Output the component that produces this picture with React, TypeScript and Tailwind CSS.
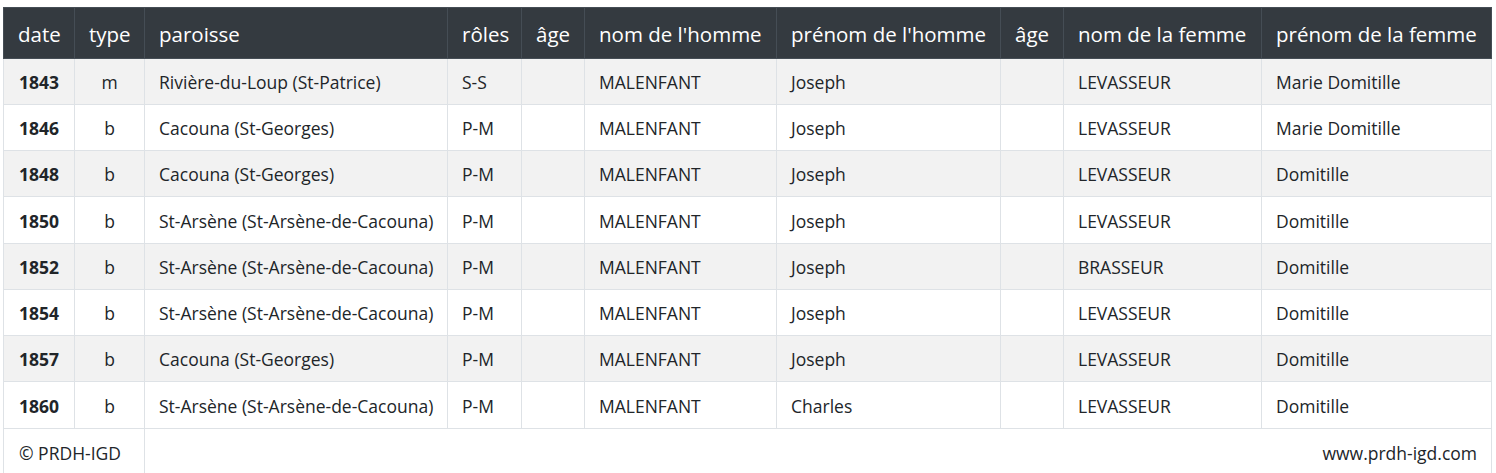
const rows = [
  ['1843', 'm', 'Rivière-du-Loup (St-Patrice)', 'S-S', '', 'MALENFANT', 'Joseph', '', 'LEVASSEUR', 'Marie Domitille'],
  ['1846', 'b', 'Cacouna (St-Georges)', 'P-M', '', 'MALENFANT', 'Joseph', '', 'LEVASSEUR', 'Marie Domitille'],
  ['1848', 'b', 'Cacouna (St-Georges)', 'P-M', '', 'MALENFANT', 'Joseph', '', 'LEVASSEUR', 'Domitille'],
  ['1850', 'b', 'St-Arsène (St-Arsène-de-Cacouna)', 'P-M', '', 'MALENFANT', 'Joseph', '', 'LEVASSEUR', 'Domitille'],
  ['1852', 'b', 'St-Arsène (St-Arsène-de-Cacouna)', 'P-M', '', 'MALENFANT', 'Joseph', '', 'BRASSEUR', 'Domitille'],
  ['1854', 'b', 'St-Arsène (St-Arsène-de-Cacouna)', 'P-M', '', 'MALENFANT', 'Joseph', '', 'LEVASSEUR', 'Domitille'],
  ['1857', 'b', 'Cacouna (St-Georges)', 'P-M', '', 'MALENFANT', 'Joseph', '', 'LEVASSEUR', 'Domitille'],
  ['1860', 'b', 'St-Arsène (St-Arsène-de-Cacouna)', 'P-M', '', 'MALENFANT', 'Charles', '', 'LEVASSEUR', 'Domitille'],
];

const headers = ['date', 'type', 'paroisse', 'rôles', 'âge', "nom de l'homme", "prénom de l'homme", 'âge', 'nom de la femme', 'prénom de la femme'];

const widths = ['w-[71px]', 'w-[70px]', 'w-[303px]', 'w-[74px]', 'w-[63px]', 'w-[192px]', 'w-[224px]', 'w-[63px]', 'w-[198px]', 'w-[230px]'];

export default function App() {
  return (
    <div className="bg-white min-h-[473px] pt-[7px] pl-[3px] font-['Open_Sans',sans-serif] text-[#212529]">
      <table className="w-[1488px] table-fixed border-collapse">
        <colgroup>
          {widths.map((w, i) => (
            <col key={i} className={w} />
          ))}
        </colgroup>
        <thead>
          <tr className="h-[51px] bg-[#343a40] text-white">
            {headers.map((h, i) => (
              <th
                key={i}
                className="border border-[#454d55] px-[14px] pt-[2px] text-left text-[20.5px] font-normal whitespace-nowrap"
              >
                {h}
              </th>
            ))}
          </tr>
        </thead>
        <tbody>
          {rows.map((r, ri) => (
            <tr
              key={ri}
              className={`${ri % 2 === 0 ? 'bg-[#f2f2f2]' : 'bg-white'} ${ri % 4 === 3 ? 'h-[47px]' : 'h-[46px]'}`}
            >
              {r.map((c, ci) => (
                <td
                  key={ci}
                  className={`border border-[#dee2e6] px-[14px] pt-[2px] text-[17.5px] whitespace-nowrap ${
                    ci === 0 ? 'font-bold text-center' : ci === 1 ? 'text-center' : 'text-left'
                  }`}
                >
                  {c}
                </td>
              ))}
            </tr>
          ))}
        </tbody>
        <tfoot>
          <tr className="h-[46px] bg-white">
            <td colSpan={2} className="border border-[#dee2e6] px-[15px] pt-[4px] text-[17.5px]">
              © PRDH-IGD
            </td>
            <td colSpan={8} className="border border-[#dee2e6] px-[14px] pt-[4px] text-right text-[17.5px]">
              www.prdh-igd.com
            </td>
          </tr>
        </tfoot>
      </table>
    </div>
  );
}
